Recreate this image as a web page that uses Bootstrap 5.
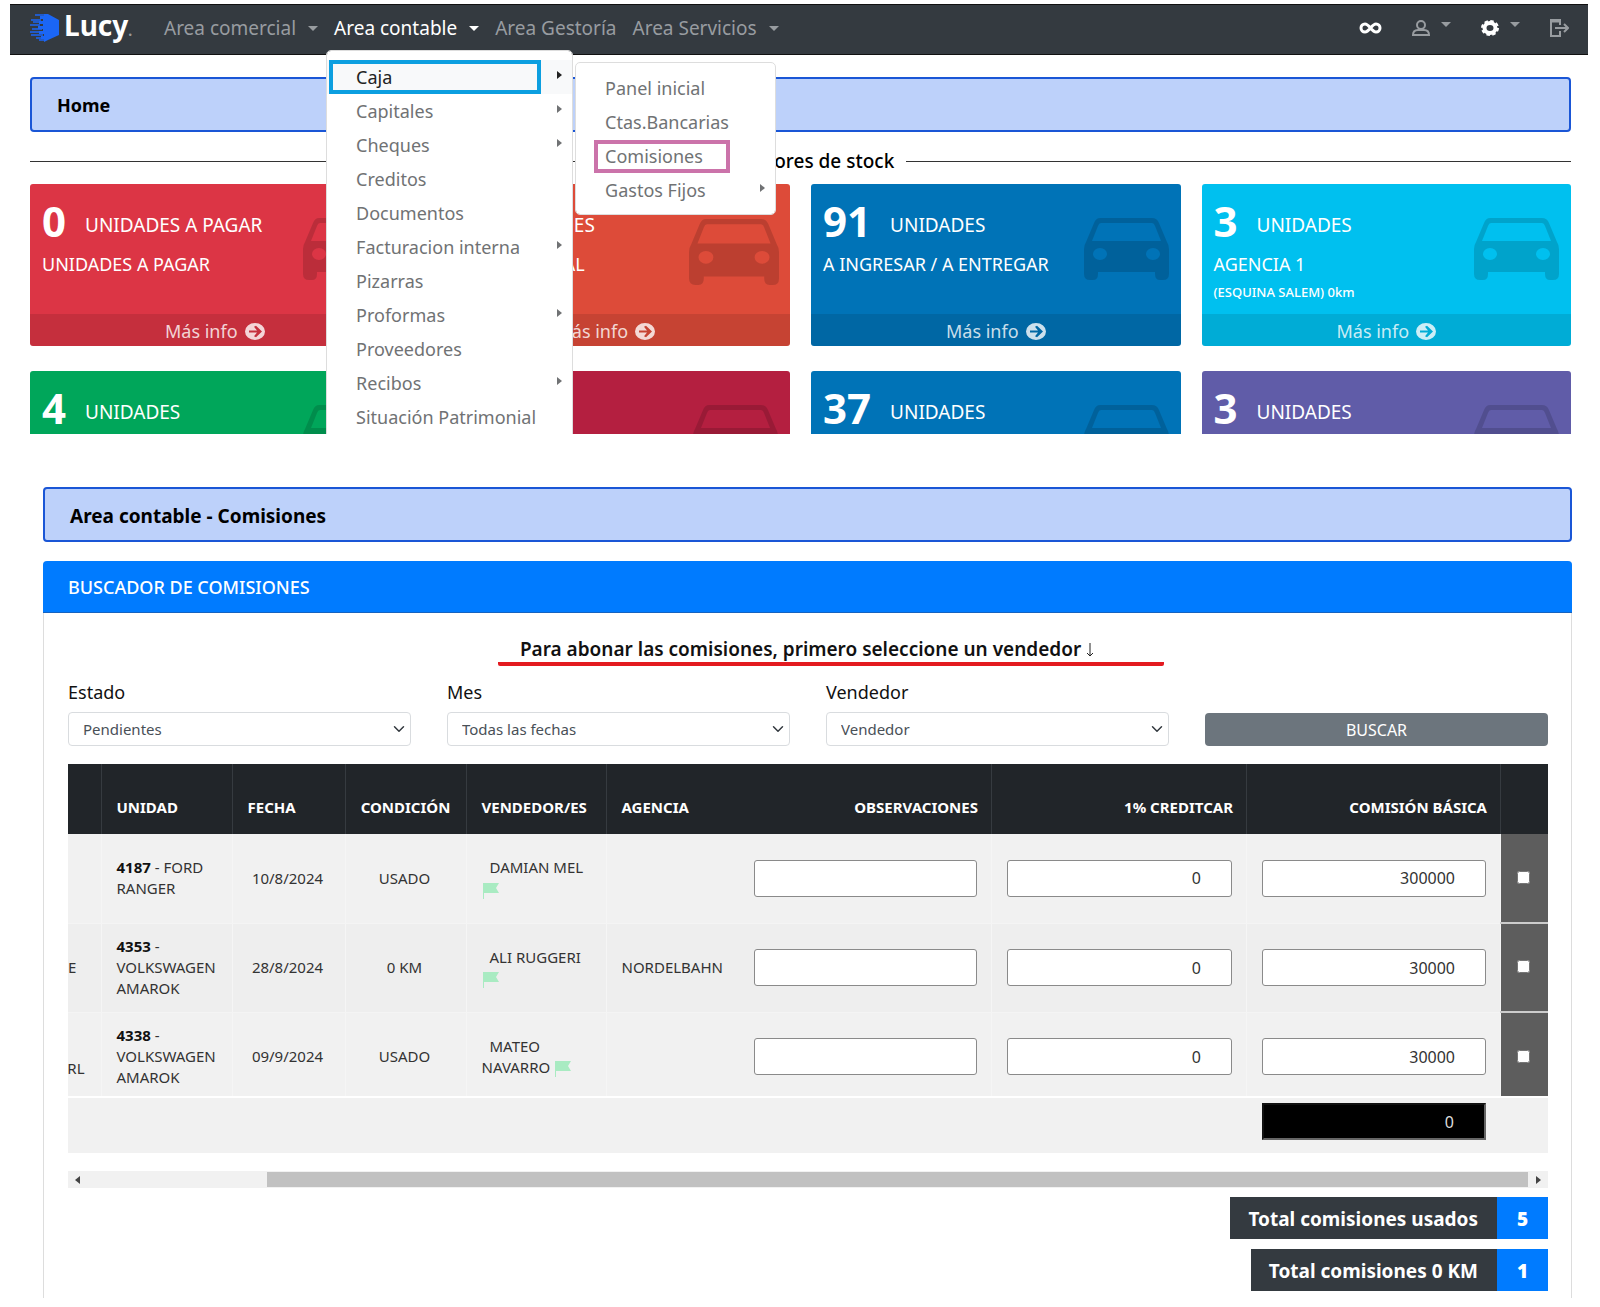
<!DOCTYPE html>
<html lang="es">
<head>
<meta charset="utf-8">
<meta name="viewport" content="width=device-width, initial-scale=1">
<title>Lucy - Comisiones</title>
<link href="https://cdn.jsdelivr.net/npm/bootstrap@5.3.0/dist/css/bootstrap.min.css" rel="stylesheet">
<style>
body{font-family:"Noto Sans","Open Sans",sans-serif;font-size:16px;color:#111;background:#fff}
a{text-decoration:none}
.home-panel{height:434px;overflow:hidden;padding:4px 12px 0 10px;position:relative}
.home-content{padding:22px 17px 0 20px}
.topbar{background:#343a40;height:51px;padding:0 19px 4px 20px;border-top:1px solid #111;border-bottom:1px solid #111}
.logo{display:flex;align-items:center;gap:5px;width:126px;color:#fff;font-size:28px;font-weight:700;line-height:30px}
.logo:hover{color:#fff}
.logo-dot{color:#999;font-size:14px}
.topbar .nav-link{font-size:19px;line-height:26px;padding:0 11px;color:#989ca0;white-space:nowrap}
.topbar .nav-link.active{color:#fff}
.topbar .dropdown-toggle::after{margin-left:12px;border-width:5px 5px 0;vertical-align:4px}
.topbar .tools{display:flex;align-items:center;gap:30px}
.topbar .tools a{display:flex;align-items:center;color:#989ca0}
.topbar .tools .dropdown-toggle::after{margin:-6px 0 0 11px}
.main-menu,.sub-menu{font-size:18px;line-height:24px;border-radius:5px;border-color:#ddd}
.topbar .main-menu{top:35px;left:0;width:247px;min-height:420px;margin:0;padding:9px 0}
.topbar .sub-menu{top:11px;left:248px;width:201px;margin:0;padding:8px 0 7px}
.main-menu .dropdown-item{display:flex;justify-content:space-between;align-items:center;color:#707274;padding:5px 10px 5px 29px}
.main-menu .dropdown-item.current{background:#f8f9fa;color:#222}
.has-sub::after{content:"";border:4px solid transparent;border-left:5px solid currentColor;border-right:0;margin-top:-4px}
.mark-blue{position:absolute;left:2px;top:9px;width:212px;height:34px;border:4px solid #0c9fe0;pointer-events:none}
.mark-pink{position:absolute;left:18px;top:77px;width:136px;height:33px;border:4px solid #cb73aa;pointer-events:none}
.title-box{background:#bdd1fa;border:2px solid #1a56d6;border-radius:4px;height:55px;padding:3px 25px 0;display:flex;align-items:center;font-size:18px;font-weight:700;color:#000;margin:0}
.stock-title{display:flex;align-items:center;gap:12px;font-size:19px;font-weight:500;line-height:24px;color:#000;margin:17px 0 11px}
.stock-title::before,.stock-title::after{content:"";flex:1;border-top:1px solid #333}
.stock-grid{display:grid;grid-template-columns:repeat(4,1fr);gap:25px 21px}
.stock{position:relative;height:162px;border-radius:3px;color:#fff;display:flex;flex-direction:column;justify-content:space-between;overflow:hidden}
.stock .info{padding:8px 12px 0}
.stock .qty{display:flex;align-items:center;gap:19px;font-size:19px;line-height:50px}
.stock .qty b{font-size:42px}
.stock .qty span{padding-top:8px}
.stock .place{font-size:18px;line-height:24px;margin-top:2px}
.stock .note{font-size:13px;line-height:20px;margin-top:6px;font-weight:500}
.stock .more{background:rgba(0,0,0,.1);color:rgba(255,255,255,.8);height:32px;display:flex;justify-content:center;align-items:center;gap:7px;font-size:18px;padding-top:2px}
.stock .car{position:absolute;right:12px;top:34px;width:85px;height:62px;fill:rgba(0,0,0,.15)}
.stock .car.big{right:11px;top:35px;width:90px;height:66px}
.work{padding:53px 28px 9px 43px}
.work .title-box{font-size:19px}
.finder{border:1px solid #ddd;border-top:0;border-bottom:0;border-radius:4px 4px 0 0;margin-top:19px;height:737px}
.finder-head{background:#007bff;color:#fff;height:52px;padding:3px 25px 0;display:flex;align-items:center;font-size:18px;border-radius:4px 4px 0 0;margin:0 -1px;border-bottom:1px solid #1663c0}
.finder-body{padding:24px 23px 0 24px}
.hint{width:666px;margin:0 auto;border-bottom:4px solid #e31a20;border-radius:2px;text-align:center;font-size:19px;font-weight:600;line-height:25px;padding-right:48px;white-space:nowrap;position:relative;left:23px;color:#111}
.hint svg{vertical-align:-2px}
.filters{display:grid;grid-template-columns:repeat(4,1fr);gap:36px;align-items:end;margin-top:14px}
.filters label{font-size:18px;line-height:24px;margin-bottom:8px;display:block}
.filters .form-select{font-size:15px;height:34px;padding:0 30px 0 14px;border-color:#d9dcdf;border-radius:4px;color:#495057;background-position:right 5px center;background-size:12px 12px}
.filters .btn{background:#6c757d;color:#fff;height:33px;padding:0;font-size:16px;border-radius:4px;width:100%}
.fees{table-layout:fixed;width:100%;margin:18px 0 0;font-size:15px;line-height:21px;color:#333;border-collapse:collapse}
.fees th{background:#212529;color:#fff;height:70px;padding:17px 15px 0;border-right:1px solid #363b40;vertical-align:middle}
.fees th.end{text-align:right;padding-right:13px}
.fees td{background:#f1f1f1;height:89px;padding:0 0 0 15px;border-right:1px solid #f5f5f5;border-bottom:1px solid #f4f4f4;vertical-align:middle}
.fees tr.alt td{background:#eee}
.fees td.mid{text-align:center;padding:0 2px 0 0}
.fees td.cut{padding:0;overflow:hidden;white-space:nowrap}
.fees td.pick,.fees tr.alt td.pick{background:#5d5d5d;text-align:center;padding:0 2px 4px 0;border-bottom:2px solid #ccc;border-right:0}
.fees tbody tr:last-child td{height:85px;padding-top:5px;border-bottom:2px solid #fff}
.fees tfoot td{height:56px;padding-bottom:8px;border-bottom:0;border-color:#f1f1f1}
.fees b{color:#111}
.fees .name{padding-left:8px}
.fees .amount{display:block;width:calc(100% - 14px);height:37px;border:1px solid #8a8a8a;border-radius:3px;background:#fff;text-align:right;padding:0 30px 0 10px;color:#333;font-size:16px}
.fees .sum{background:#000;color:#ddd;border:2px inset #666;border-radius:0}
.fees .pick input{width:13px;height:13px;vertical-align:middle;margin:0}
.hbar{height:17px;background:#f1f1f1;margin-top:18px;display:flex;align-items:center;justify-content:space-between;padding:0 7px}
.hbar i{border:4px solid transparent}
.hbar .lt{border-right:5px solid #444;border-left:0}
.hbar .rt{border-left:5px solid #444;border-right:0}
.hbar span{background:#c1c1c1;height:15px;margin-left:187px;margin-right:8px;flex:1}
.totals{display:flex;flex-direction:column;align-items:flex-end;gap:10px;margin-top:9px;font-size:19px;font-weight:700;color:#fff}
.totals div{display:flex;height:42px;line-height:44px}
.totals span{background:#343a40;padding:0 19px 0 18px}
.totals strong{background:#007bff;width:51px;text-align:center}
</style>
<script src="https://cdn.jsdelivr.net/npm/bootstrap@5.3.0/dist/js/bootstrap.bundle.min.js"></script>
</head>
<body>
<svg width="0" height="0" class="position-absolute">
<symbol id="car" viewBox="0 0 85 62" preserveAspectRatio="none"><path fill-rule="evenodd" d="M16 0h52q5 0 7 5l8 19q2 3 2 7v25q0 6-6 6h-3q-5 0-5-6v-2H14v2q0 6-5 6H6q-6 0-6-6V31q0-4 2-7l8-19q2-5 6-5zM17 5q-2 0-3 3L8 23h69L71 8q-1-3-3-3zM16 30a7 6 0 1 0 0 12a7 6 0 1 0 0-12zM69 30a7 6 0 1 0 0 12a7 6 0 1 0 0-12z"/></symbol>
<symbol id="go" viewBox="0 0 20 18" preserveAspectRatio="none"><path fill-rule="evenodd" fill="currentColor" d="M10 0a10 9 0 1 1 0 18a10 9 0 1 1 0-18zM9 4l3 4H4v2h8l-3 4 2 1 6-6-6-6z"/></symbol>
<symbol id="flag" viewBox="0 0 18 17"><path fill="#a9ebc2" d="M1 1h16l-3 5 3 5H2v6H1z"/></symbol>
</svg>

<section class="home-panel">
<nav class="topbar navbar navbar-expand flex-nowrap">
<a class="logo" href="#"><svg width="29" height="28" viewBox="0 0 29 28"><path d="M14 0h4l11 6v15l-11 5-4 2v-3h-3v-3h3v-2H9v-3h4v-2H8v-3h5v-2H9V7h4V5h-3V2h4z" fill="#1b66f5"/><path d="M5 1h9M1 6h10M3 8h8M0 11h10M2 15h10M0 18h10M1 21h12M6 24h8M9 26h6" stroke="#1b66f5" stroke-width="1.600"/></svg><span>Lucy<span class="logo-dot">.</span></span></a>
<ul class="navbar-nav">
<li class="nav-item"><a class="nav-link dropdown-toggle" href="#">Area comercial</a></li>
<li class="nav-item position-relative"><a class="nav-link dropdown-toggle active" href="#">Area contable</a>
<div class="dropdown-menu main-menu show">
<a class="dropdown-item has-sub current" href="#">Caja</a>
<a class="dropdown-item has-sub" href="#">Capitales</a>
<a class="dropdown-item has-sub" href="#">Cheques</a>
<a class="dropdown-item" href="#">Creditos</a>
<a class="dropdown-item" href="#">Documentos</a>
<a class="dropdown-item has-sub" href="#">Facturacion interna</a>
<a class="dropdown-item" href="#">Pizarras</a>
<a class="dropdown-item has-sub" href="#">Proformas</a>
<a class="dropdown-item" href="#">Proveedores</a>
<a class="dropdown-item has-sub" href="#">Recibos</a>
<a class="dropdown-item" href="#">Situación Patrimonial</a>
<span class="mark-blue"></span>
<div class="dropdown-menu sub-menu show">
<a class="dropdown-item" href="#">Panel inicial</a>
<a class="dropdown-item" href="#">Ctas.Bancarias</a>
<a class="dropdown-item" href="#">Comisiones</a>
<a class="dropdown-item has-sub" href="#">Gastos Fijos</a>
<span class="mark-pink"></span>
</div>
</div></li>
<li class="nav-item"><a class="nav-link" href="#">Area Gestoría</a></li>
<li class="nav-item"><a class="nav-link dropdown-toggle" href="#">Area Servicios</a></li>
</ul>
<div class="tools ms-auto">
<a href="#" aria-label="Todo"><svg width="23" height="12" viewBox="0 0 23 12" fill="none" stroke="#fff" stroke-width="3"><path d="M11.500 6C9 3 8 2 6 2a4 4 0 0 0 0 8c2 0 3-1 5.500-4S15 2 17 2a4 4 0 0 1 0 8c-2 0-3-1-5.500-4z"/></svg></a>
<a href="#" class="dropdown-toggle" aria-label="Usuario"><svg width="18" height="16" viewBox="0 0 18 16" fill="none" stroke="currentColor" stroke-width="2"><ellipse cx="9" cy="5" rx="4" ry="4"/><path d="M1 15c0-4 3-5 5-5h6c2 0 5 1 5 5z"/></svg></a>
<a href="#" class="dropdown-toggle" aria-label="Configuración"><svg width="18" height="16" viewBox="0 0 18 16"><ellipse cx="9" cy="8" rx="5.500" ry="5" fill="none" stroke="#fff" stroke-width="4"/><ellipse cx="9" cy="8" rx="8" ry="7" fill="none" stroke="#fff" stroke-width="2" stroke-dasharray="3.500 2.400"/></svg></a>
<a href="#" aria-label="Salir"><svg width="19" height="18" viewBox="0 0 19 18" fill="none" stroke="currentColor" stroke-width="2"><path d="M10 6V1H1v16h9v-5M5 9h12M14 5l4 4-4 4"/><path d="M1 2h9" stroke-width="3"/></svg></a>
</div>
</nav>
<div class="home-content">
<h1 class="title-box">Home</h1>
<h2 class="stock-title">Indicadores de stock</h2>
<div class="stock-grid">
<article class="stock" style="background:#dc3545"><div class="info"><div class="qty"><b>0</b><span>UNIDADES A PAGAR</span></div><div class="place">UNIDADES A PAGAR</div></div><svg class="car"><use href="#car"/></svg><a class="more" href="#">Más info <svg width="20" height="17"><use href="#go"/></svg></a></article>
<article class="stock" style="background:#dd4b39"><div class="info"><div class="qty"><b>12</b><span>UNIDADES</span></div><div class="place">UNIDAD CENTRAL</div></div><svg class="car big"><use href="#car"/></svg><a class="more" href="#">Más info <svg width="20" height="17"><use href="#go"/></svg></a></article>
<article class="stock" style="background:#0073b7"><div class="info"><div class="qty"><b>91</b><span>UNIDADES</span></div><div class="place">A INGRESAR / A ENTREGAR</div></div><svg class="car"><use href="#car"/></svg><a class="more" href="#">Más info <svg width="20" height="17"><use href="#go"/></svg></a></article>
<article class="stock" style="background:#00c0ef"><div class="info"><div class="qty"><b>3</b><span>UNIDADES</span></div><div class="place">AGENCIA 1</div><div class="note">(ESQUINA SALEM) 0km</div></div><svg class="car"><use href="#car"/></svg><a class="more" href="#">Más info <svg width="20" height="17"><use href="#go"/></svg></a></article>
<article class="stock" style="background:#00a65a"><div class="info"><div class="qty"><b>4</b><span>UNIDADES</span></div></div><svg class="car"><use href="#car"/></svg></article>
<article class="stock" style="background:#b41f40"><svg class="car"><use href="#car"/></svg></article>
<article class="stock" style="background:#0073b7"><div class="info"><div class="qty"><b>37</b><span>UNIDADES</span></div></div><svg class="car"><use href="#car"/></svg></article>
<article class="stock" style="background:#605ca8"><div class="info"><div class="qty"><b>3</b><span>UNIDADES</span></div></div><svg class="car"><use href="#car"/></svg></article>
</div>
</div>
</section>

<main class="work">
<h2 class="title-box">Area contable - Comisiones</h2>
<section class="finder">
<h3 class="finder-head">BUSCADOR DE COMISIONES</h3>
<div class="finder-body">
<p class="hint">Para abonar las comisiones, primero seleccione un vendedor <svg width="8" height="15" viewBox="0 0 8 15" fill="none" stroke="#222"><path d="M4 0v13M1 10l3 3 3-3"/></svg></p>
<form class="filters">
<div><label for="estado">Estado</label><select id="estado" class="form-select"><option>Pendientes</option></select></div>
<div><label for="mes">Mes</label><select id="mes" class="form-select"><option>Todas las fechas</option></select></div>
<div><label for="vend">Vendedor</label><select id="vend" class="form-select"><option>Vendedor</option></select></div>
<button type="button" class="btn">BUSCAR</button>
</form>
<table class="fees">
<colgroup><col style="width:33px"><col style="width:131px"><col style="width:113px"><col style="width:121px"><col style="width:140px"><col style="width:133px"><col><col style="width:255px"><col style="width:254px"><col style="width:47px"></colgroup>
<thead><tr><th></th><th>UNIDAD</th><th>FECHA</th><th class="px-0 text-center">CONDICIÓN</th><th>VENDEDOR/ES</th><th class="border-0">AGENCIA</th><th class="end">OBSERVACIONES</th><th class="end">1% CREDITCAR</th><th class="end">COMISIÓN BÁSICA</th><th class="border-0"></th></tr></thead>
<tbody>
<tr><td class="cut"></td><td><b>4187</b> - FORD RANGER</td><td class="mid">10/8/2024</td><td class="mid">USADO</td><td><span class="name">DAMIAN MEL</span><br><svg width="18" height="17"><use href="#flag"/></svg></td><td class="border-end-0"></td><td><input class="amount" aria-label="Observaciones 4187"></td><td><input class="amount" value="0" aria-label="Creditcar 4187"></td><td><input class="amount" value="300000" aria-label="Comisión 4187"></td><td class="pick"><input type="checkbox" aria-label="Elegir 4187"></td></tr>
<tr class="alt"><td class="cut">E</td><td><b>4353</b> -<br>VOLKSWAGEN AMAROK</td><td class="mid">28/8/2024</td><td class="mid">0 KM</td><td><span class="name">ALI RUGGERI</span><br><svg width="18" height="17"><use href="#flag"/></svg></td><td class="border-end-0">NORDELBAHN</td><td><input class="amount" aria-label="Observaciones 4353"></td><td><input class="amount" value="0" aria-label="Creditcar 4353"></td><td><input class="amount" value="30000" aria-label="Comisión 4353"></td><td class="pick"><input type="checkbox" aria-label="Elegir 4353"></td></tr>
<tr><td class="cut"><div class="d-flex justify-content-end overflow-hidden pe-3 pt-4">SRL</div></td><td><b>4338</b> -<br>VOLKSWAGEN AMAROK</td><td class="mid">09/9/2024</td><td class="mid">USADO</td><td><span class="name">MATEO</span><br>NAVARRO <svg width="18" height="17"><use href="#flag"/></svg></td><td class="border-end-0"></td><td><input class="amount" aria-label="Observaciones 4338"></td><td><input class="amount" value="0" aria-label="Creditcar 4338"></td><td><input class="amount" value="30000" aria-label="Comisión 4338"></td><td class="pick"><input type="checkbox" aria-label="Elegir 4338"></td></tr>
</tbody>
<tfoot><tr><td colspan="7"></td><td></td><td><input class="amount sum" value="0" aria-label="Total" readonly></td><td></td></tr></tfoot>
</table>
<div class="hbar"><i class="lt"></i><span></span><i class="rt"></i></div>
<div class="totals">
<div><span>Total comisiones usados</span><strong>5</strong></div>
<div><span>Total comisiones 0 KM</span><strong>1</strong></div>
</div>
</div>
</section>
</main>
</body>
</html>
